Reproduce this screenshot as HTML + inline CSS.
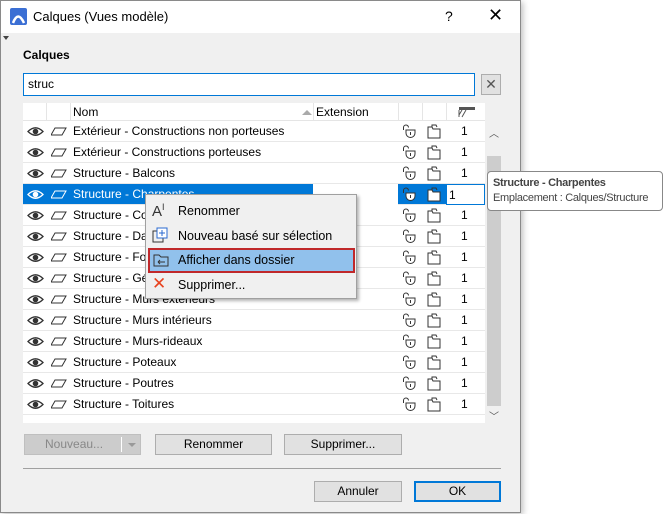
<!DOCTYPE html>
<html><head><meta charset="utf-8"><style>
*{box-sizing:border-box;margin:0;padding:0}
body{width:664px;height:514px;background:#fff;font-family:"Liberation Sans",sans-serif;font-size:12px;color:#000;position:relative;overflow:hidden}
.dlg{position:absolute;left:0;top:0;width:521px;height:513px;background:#f0f0f0;border:1px solid #8a8a8a;box-shadow:2px 2px 6px rgba(0,0,0,.25)}
.title{position:absolute;left:0;top:0;width:519px;height:32px;background:#fff}
.abs{position:absolute}
.row{position:absolute;left:22px;width:462px;height:21px;border-bottom:1px solid #e8e8e8;background:#fff}
.row .t{position:absolute;left:50px;top:3px;white-space:nowrap}
.row .n{position:absolute;left:438px;top:3px}
.btn{position:absolute;height:21px;border:1px solid #adadad;background:#e1e1e1;text-align:center;line-height:19px}
.mi{position:absolute;left:32px;white-space:nowrap;font-size:12.5px}
</style></head><body>
<div class="dlg">
<div class="title">
<svg class="abs" style="left:9px;top:7px" width="17" height="17"><rect width="17" height="17" rx="2" fill="#3b6fd4"/><path d="M3 15 Q8 2 14 15" stroke="#fff" stroke-width="2.5" fill="none"/></svg>
<div class="abs" style="left:32px;top:8px;font-size:13px">Calques (Vues modèle)</div>
<div class="abs" style="left:444px;top:7px;font-size:14px">?</div>
<div class="abs" style="left:487px;top:4px;font-size:18px">✕</div>
</div>
<div class="abs" style="left:2px;top:35px;width:0;height:0;border-left:3px solid transparent;border-right:3px solid transparent;border-top:4px solid #444"></div>
<div class="abs" style="left:22px;top:47px;font-weight:bold">Calques</div>
<div class="abs" style="left:22px;top:72px;width:452px;height:23px;background:#fff;border:1px solid #0078d7;padding:3px 4px">struc</div>
<div class="abs" style="left:480px;top:73px;width:20px;height:21px;border:1px solid #adadad;background:#e1e1e1;text-align:center;line-height:19px;color:#555;font-size:14px">✕</div>
<div class="abs" style="left:22px;top:102px;width:462px;height:320px;background:#fff"></div>
<div class="abs" style="left:22px;top:102px;width:462px;height:18px;background:#fff;border-bottom:1px solid #e5e5e5">
<div class="abs" style="left:23px;top:0;width:1px;height:18px;background:#e5e5e5"></div>
<div class="abs" style="left:47px;top:0;width:1px;height:18px;background:#e5e5e5"></div>
<div class="abs" style="left:50px;top:2px">Nom</div>
<div class="abs" style="left:279px;top:7px;width:0;height:0;border-left:5px solid transparent;border-right:5px solid transparent;border-bottom:5px solid #aaa"></div>
<div class="abs" style="left:290px;top:0;width:1px;height:18px;background:#e5e5e5"></div>
<div class="abs" style="left:293px;top:2px">Extension</div>
<div class="abs" style="left:375px;top:0;width:1px;height:18px;background:#e5e5e5"></div>
<div class="abs" style="left:399px;top:0;width:1px;height:18px;background:#e5e5e5"></div>
<div class="abs" style="left:423px;top:0;width:1px;height:18px;background:#e5e5e5"></div>
<svg class="abs" style="left:435px;top:3px" width="18" height="12"><rect x="1" y="1" width="16" height="3" fill="#555"/><path d="M1 4v7M4 4l-3 5M8 4l-4 7" stroke="#555" fill="none"/></svg>
</div>
<div id="rows"></div>
<div class="abs" style="left:486px;top:120px;width:14px;height:302px;background:#f0f0f0"></div>
<div class="abs" style="left:488px;top:124px;font-size:10px;color:#555">︿</div>
<div class="abs" style="left:486px;top:155px;width:14px;height:250px;background:#cdcdcd"></div>
<div class="abs" style="left:488px;top:407px;font-size:10px;color:#555">﹀</div>
<div class="btn" style="left:23px;top:433px;width:117px;color:#888;background:#cccccc;border-color:#bfbfbf;text-align:left;padding-left:20px">Nouveau...<span style="position:absolute;left:96px;top:2px;width:1px;height:15px;background:#fff"></span><span style="position:absolute;left:103px;top:8px;border-left:4px solid transparent;border-right:4px solid transparent;border-top:4px solid #999"></span></div>
<div class="btn" style="left:154px;top:433px;width:117px">Renommer</div>
<div class="btn" style="left:283px;top:433px;width:118px">Supprimer...</div>
<div class="abs" style="left:22px;top:467px;width:478px;height:1px;background:#a0a0a0"></div>
<div class="btn" style="left:313px;top:480px;width:88px">Annuler</div>
<div class="btn" style="left:413px;top:480px;width:87px;border:2px solid #0078d7;line-height:17px">OK</div>
</div>
<!-- context menu -->
<div class="abs" style="left:145px;top:194px;width:212px;height:105px;background:#f0f0f0;border:1px solid #a0a0a0;box-shadow:2px 2px 3px rgba(0,0,0,.3)">
<div class="abs" style="left:6px;top:7px;font-size:15px;color:#333">A<sup style="font-size:9px">I</sup></div>
<div class="mi" style="top:9px">Renommer</div>
<svg class="abs" style="left:6px;top:32px" width="16" height="16"><rect x="1" y="4" width="10" height="11" fill="none" stroke="#333"/><rect x="5" y="1" width="10" height="10" fill="#fff" stroke="#2a6ad0"/><path d="M10 3v6M7 6h6" stroke="#2a6ad0"/></svg>
<div class="mi" style="top:34px">Nouveau basé sur sélection</div>
<div class="abs" style="left:2px;top:53px;width:207px;height:25px;background:#91c1ec;border:2px solid #c0282a"></div>
<svg class="abs" style="left:7px;top:58px" width="16" height="14"><path d="M1 2h5l2 2h7v9H1z" fill="none" stroke="#333"/><path d="M5 9h7M5 9l2-2M5 9l2 2" stroke="#333" fill="none"/></svg>
<div class="mi" style="top:58px">Afficher dans dossier</div>
<div class="abs" style="left:6px;top:79px;font-size:17px;color:#e8431f">✕</div>
<div class="mi" style="top:83px">Supprimer...</div>
</div>
<!-- tooltip -->
<div class="abs" style="left:487px;top:171px;width:176px;height:40px;background:#fff;border:1px solid #888;border-radius:4px;padding:5px 5px;font-size:11px;color:#444;white-space:nowrap;letter-spacing:-0.3px"><b>Structure - Charpentes</b><br><span style="line-height:19px">Emplacement : Calques/Structure</span></div>
<script>
var names=["Extérieur - Constructions non porteuses","Extérieur - Constructions porteuses","Structure - Balcons","Structure - Charpentes","Structure - Constructions","Structure - Dalles","Structure - Fondations","Structure - Général","Structure - Murs extérieurs","Structure - Murs intérieurs","Structure - Murs-rideaux","Structure - Poteaux","Structure - Poutres","Structure - Toitures"];
var h="";
names.forEach(function(n,i){
var top=120+21*i,sel=i==3;
var ic=sel?"#fff":"#333";
h+='<div class="row" style="top:'+top+'px;'+(sel?'background:#0078d7;color:#fff':'')+'">';
if(sel)h+='<div class="abs" style="left:290px;top:0;width:85px;height:21px;background:#fff"></div><div class="abs" style="left:423px;top:0;width:39px;height:21px;background:#fff;border:1px solid #0078d7;color:#000;padding:3px 2px">1</div>';
h+='<svg class="abs" style="left:4px;top:5px" width="17" height="11"><path d="M1 5.5Q8.5 -2 16 5.5Q8.5 13 1 5.5Z" fill="none" stroke="'+ic+'" stroke-width="1.3"/><circle cx="8.5" cy="5.5" r="2.8" fill="'+ic+'"/></svg>';
h+='<svg class="abs" style="left:28px;top:6px" width="16" height="9"><path d="M4 1h11l-4 7H0z" fill="none" stroke="'+ic+'"/></svg>';
h+='<div class="t">'+n+'</div>';
h+='<svg class="abs" style="left:379px;top:3px" width="15" height="15"><path d="M1.5 6V3.5a2.5 2.5 0 0 1 5 0" fill="none" stroke="#333"/><path d="M4 6h9v3a4.5 4.5 0 0 1-9 0z" fill="'+(sel?'#fff':'none')+'" stroke="#333"/><path d="M8.5 8v3" stroke="#333"/></svg>';
h+='<svg class="abs" style="left:404px;top:3px" width="14" height="15"><path d="M1 3h4l1 2h7v9H1z" fill="'+(sel?'#fff':'none')+'" stroke="#333"/><path d="M5 3V1h4l1 2" fill="none" stroke="#333"/></svg>';
if(!sel)h+='<div class="n">1</div>';
h+='</div>';});
document.getElementById("rows").outerHTML=h;
</script>
</body></html>
